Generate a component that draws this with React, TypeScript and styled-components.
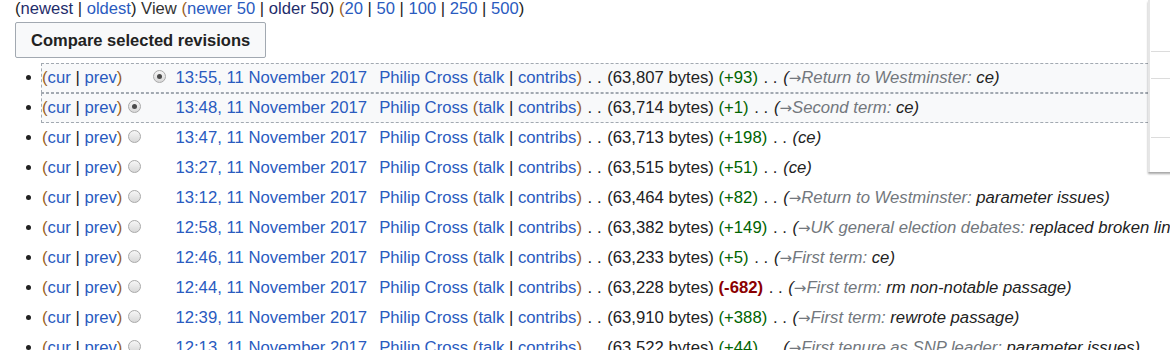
import React from 'react';
import styled, { createGlobalStyle } from 'styled-components';

const Global = createGlobalStyle`
  html, body { margin: 0; padding: 0; background: #fff; overflow: hidden; }
  body {
    font-family: "Liberation Sans", Arial, sans-serif;
    font-size: 16.7px;
    color: #222;
  }
`;

const Page = styled.div`
  position: relative;
  width: 1170px;
  height: 350px;
  overflow: hidden;
  padding-left: 15px;
  box-sizing: border-box;
`;

const TopLine = styled.div`
  font-size: 16.6px;
  line-height: 17px;
  white-space: nowrap;
`;

const Link = styled.a<{ $tone?: 'blue' | 'navy' }>`
  color: ${(p) => (p.$tone === 'navy' ? '#1f2d6b' : '#2a5bbf')};
  text-decoration: none;
  cursor: pointer;
`;

const Paren = styled.span<{ $tone?: 'brown' | 'dark' }>`
  color: ${(p) => (p.$tone === 'brown' ? '#9a5f1f' : '#222')};
`;

const Pipe = styled.span`
  color: #222;
`;

const Muted = styled.span`
  color: #333;
`;

const CompareButton = styled.button`
  display: block;
  margin-top: 5px;
  height: 36px;
  padding: 0 15px;
  font-family: inherit;
  font-size: 16.5px;
  font-weight: bold;
  color: #222;
  background: #f8f9fa;
  border: 1px solid #a2a9b1;
  border-radius: 2px;
  white-space: nowrap;
`;

const HistoryList = styled.ul`
  margin: 5px 0 0 0;
  padding: 0 0 0 28px;
  width: 1400px;
  list-style: disc;
`;

const Item = styled.li`
  height: 30px;
`;

const Row = styled.div<{ $selected?: boolean }>`
  display: flex;
  align-items: center;
  height: 30px;
  margin-left: -2px;
  padding-left: 1px;
  white-space: nowrap;
  background: ${(p) => (p.$selected ? '#f8f9fa' : 'transparent')};
  outline: ${(p) => (p.$selected ? '1px dashed #a2a9b1' : 'none')};
  outline-offset: -1px;
`;

const Radio = styled.span<{ $checked?: boolean; $hidden?: boolean; $gap: number }>`
  flex: none;
  box-sizing: border-box;
  width: 13px;
  height: 13px;
  margin-left: ${(p) => p.$gap}px;
  margin-bottom: 4px;
  border-radius: 50%;
  border: 1px solid #a9a9a9;
  background: linear-gradient(#f6f6f6, #d8d8d8);
  visibility: ${(p) => (p.$hidden ? 'hidden' : 'visible')};
  display: flex;
  align-items: center;
  justify-content: center;
  &::after {
    content: '';
    width: 5px;
    height: 5px;
    border-radius: 50%;
    background: #4a4a4a;
    display: ${(p) => (p.$checked ? 'block' : 'none')};
  }
`;

const DateLink = styled(Link)`
  margin-left: 9px;
`;

const UserPart = styled.span`
  margin-left: 12px;
`;

const Separator = styled.span`
  padding: 0 1px;
  color: #222;
`;

const Size = styled.span`
  color: #222;
`;

const Diff = styled.span<{ $neg?: boolean }>`
  color: ${(p) => (p.$neg ? '#8b0000' : '#006400')};
  font-weight: ${(p) => (p.$neg ? 'bold' : 'normal')};
`;

const Comment = styled.span`
  font-style: italic;
  color: #222;
`;

const AutoComment = styled.span`
  color: #72777d;
`;

const Arrow = styled.span`
  font-family: "DejaVu Sans", sans-serif;
  font-size: 15px;
`;

const SidePanel = styled.div`
  position: absolute;
  left: 1148px;
  top: 0;
  width: 40px;
  height: 172px;
  background: #fff;
  border-left: 2px solid #e6e6e6;
  box-shadow: 0 2px 2px rgba(0, 0, 0, 0.35);
  display: flex;
  flex-direction: column;
  padding-left: 1px;
`;

const PanelItem = styled.div<{ $h: number; $last?: boolean }>`
  height: ${(p) => p.$h}px;
  flex: none;
  border-bottom: ${(p) => (p.$last ? 'none' : '1px solid #dcdcdc')};
`;

type Rev = {
  time: string;
  bytes: string;
  diff: string;
  section?: string;
  text: string;
  selected?: boolean;
  radios: [boolean | null, boolean | null];
};

const revs: Rev[] = [
  { time: '13:55', bytes: '63,807', diff: '+93', section: 'Return to Westminster', text: 'ce', selected: true, radios: [null, true] },
  { time: '13:48', bytes: '63,714', diff: '+1', section: 'Second term', text: 'ce', selected: true, radios: [true, null] },
  { time: '13:47', bytes: '63,713', diff: '+198', text: 'ce', radios: [false, null] },
  { time: '13:27', bytes: '63,515', diff: '+51', text: 'ce', radios: [false, null] },
  { time: '13:12', bytes: '63,464', diff: '+82', section: 'Return to Westminster', text: 'parameter issues', radios: [false, null] },
  { time: '12:58', bytes: '63,382', diff: '+149', section: 'UK general election debates', text: 'replaced broken links', radios: [false, null] },
  { time: '12:46', bytes: '63,233', diff: '+5', section: 'First term', text: 'ce', radios: [false, null] },
  { time: '12:44', bytes: '63,228', diff: '-682', section: 'First term', text: 'rm non-notable passage', radios: [false, null] },
  { time: '12:39', bytes: '63,910', diff: '+388', section: 'First term', text: 'rewrote passage', radios: [false, null] },
  { time: '12:13', bytes: '63,522', diff: '+44', section: 'First tenure as SNP leader', text: 'parameter issues', radios: [false, null] },
];

function RevRow({ r }: { r: Rev }) {
  return (
    <Item>
      <Row $selected={r.selected}>
        <span>
          <Paren $tone="brown">(</Paren>
          <Link>cur</Link> <Pipe>|</Pipe> <Link>prev</Link>
          <Paren $tone="brown">)</Paren>
        </span>
        <Radio $gap={6} $hidden={r.radios[0] === null} $checked={r.radios[0] === true} />
        <Radio $gap={12} $hidden={r.radios[1] === null} $checked={r.radios[1] === true} />
        <DateLink>{r.time}, 11 November 2017</DateLink>
        <UserPart>
          <Link>Philip Cross</Link>{' '}
          <Paren $tone="brown">(</Paren>
          <Link>talk</Link> <Pipe>|</Pipe> <Link>contribs</Link>
          <Paren $tone="brown">)</Paren>
          {'\u00a0'}
          <Separator>. .</Separator>
          {'\u00a0'}
          <Size>({r.bytes} bytes)</Size>{' '}
          <Diff $neg={r.diff.startsWith('-')}>({r.diff})</Diff>
          {'\u00a0'}
          <Separator>. .</Separator>
          {'\u00a0'}
          <Comment>
            (
            {r.section ? (
              <AutoComment>
                <Arrow>→</Arrow>
                {r.section}:{' '}
              </AutoComment>
            ) : null}
            {r.text})
          </Comment>
        </UserPart>
      </Row>
    </Item>
  );
}

export default function App() {
  return (
    <>
      <Global />
      <Page>
        <TopLine>
          <Paren>(</Paren>
          <Link $tone="navy">newest</Link> <Pipe>|</Pipe> <Link>oldest</Link>
          <Paren>)</Paren> <Muted>View</Muted> <Paren $tone="brown">(</Paren>
          <Link>newer 50</Link> <Pipe>|</Pipe> <Link $tone="navy">older 50</Link>
          <Paren>)</Paren> <Paren $tone="brown">(</Paren>
          <Link>20</Link> <Pipe>|</Pipe> <Link>50</Link> <Pipe>|</Pipe> <Link>100</Link>{' '}
          <Pipe>|</Pipe> <Link>250</Link> <Pipe>|</Pipe> <Link>500</Link>
          <Paren>)</Paren>
        </TopLine>
        <CompareButton type="button">Compare selected revisions</CompareButton>
        <HistoryList>
          {revs.map((r) => (
            <RevRow key={r.time} r={r} />
          ))}
        </HistoryList>
        <SidePanel>
          <PanelItem $h={51} />
          <PanelItem $h={26} />
          <PanelItem $h={58} />
          <PanelItem $h={34} $last />
        </SidePanel>
      </Page>
    </>
  );
}
